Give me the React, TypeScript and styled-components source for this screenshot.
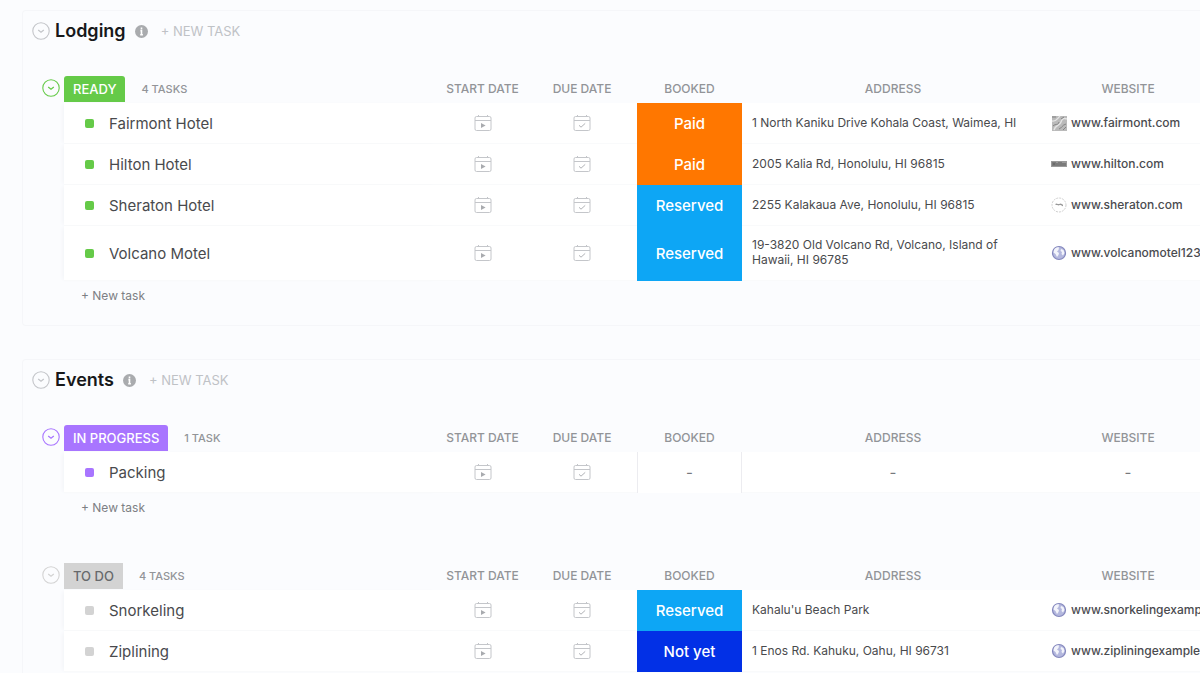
import React from "react";
import styled, { createGlobalStyle } from "styled-components";

const GlobalStyle = createGlobalStyle`
  *, *::before, *::after { box-sizing: border-box; }
  body {
    margin: 0;
    background: #fbfcfe;
    color: #494a4d;
    font-family: Inter, "Liberation Sans", sans-serif;
    font-size: 15px;
  }
  button {
    font-family: inherit;
    border: 0;
    padding: 0;
    background: none;
    cursor: pointer;
  }
  svg { flex: none; }
`;

const Page = styled.main`
  display: flex;
  flex-direction: column;
  gap: 33px;
  height: 100vh;
  overflow: hidden;
  padding: 10px 0 0 22px;
`;

const Panel = styled.section`
  flex: none;
  margin-right: -12px;
  padding: 0 0 16px 19px;
  border: 1px solid #f5f6f9;
  border-right: 0;
  border-radius: 4px 0 0 4px;
`;

const PanelHeader = styled.header`
  display: flex;
  align-items: center;
  height: 40px;
  margin: 0 0 24px -10px;
`;

const PanelTitle = styled.h2`
  margin: 0 9px 0 5px;
  color: #17181a;
  font-size: 18px;
  line-height: 24px;
  font-weight: 600;
`;

const HeaderNewTask = styled.button`
  margin-left: 13px;
  color: #bfc2c6;
  font-size: 13px;
  line-height: 16px;
`;

const ToggleButton = styled.button<{ $color: string }>`
  display: flex;
  flex: none;
  width: 18px;
  height: 18px;
  color: ${(p) => p.$color};
`;

const Groups = styled.div`
  display: flex;
  flex-direction: column;
  gap: 41px;
`;

const Group = styled.section`
  display: grid;
  grid-template-columns: 18px minmax(0, 1fr);
  column-gap: 4px;

  & > ${ToggleButton} { margin-top: 4px; }
`;

const TaskTable = styled.table`
  width: 100%;
  table-layout: fixed;
  border-collapse: separate;
  border-spacing: 0;
`;

const ColumnHead = styled.th<{ $width?: number }>`
  width: ${(p) => (p.$width ? `${p.$width}px` : "auto")};
  height: 28px;
  padding: 0;
  color: #929498;
  font-size: 12px;
  line-height: 16px;
  font-weight: 500;
  text-align: center;
  text-transform: uppercase;
`;

const StatusBar = styled.div`
  display: flex;
  align-items: center;
  gap: 16px;
  height: 28px;
  font-size: 11px;
`;

const StatusPill = styled.span<{ $bg: string; $fg: string; $square?: boolean }>`
  padding: 0 9px;
  border-radius: ${(p) => (p.$square ? "0" : "3px 3px 0 0")};
  background: ${(p) => p.$bg};
  color: ${(p) => p.$fg};
  font-size: 13px;
  line-height: 26px;
  font-weight: 500;
`;

const Row = styled.tr<{ $tall?: boolean }>`
  height: ${(p) => (p.$tall ? 55 : 41)}px;
`;

const Cell = styled.td`
  padding: 0;
  background: #ffffff;
  border-bottom: 1px solid #f9fafb;
  color: #77797d;
  text-align: center;
`;

const NameCell = styled(Cell)`
  padding: 1px 0 0 21px;
  box-shadow: -3px 0 4px -2px #f1f3f6;
  color: #494a4d;
  text-align: left;
`;

const TaskName = styled.span`
  display: flex;
  align-items: center;
  gap: 15px;
  font-size: 15px;
  line-height: 20px;
`;

const StatusDot = styled.span<{ $color: string }>`
  width: 9px;
  height: 9px;
  border-radius: 2px;
  background: ${(p) => p.$color};
`;

const BookedCell = styled(Cell)<{ $bg?: string }>`
  background: ${(p) => p.$bg ?? "#ffffff"};
  border: 0 solid #ececf0;
  border-width: ${(p) => (p.$bg ? "0" : "0 1px")};
  color: ${(p) => (p.$bg ? "#ffffff" : "#77797d")};
  font-size: 15px;
  font-weight: ${(p) => (p.$bg ? 500 : 400)};
`;

const AddressCell = styled(Cell)`
  padding: 0 10px 2px;
  color: #494a4d;
  font-size: 12px;
  line-height: 15px;
  text-align: left;
`;

const WebsiteCell = styled(Cell)`
  padding-left: 7px;
  text-align: left;
`;

const WebsiteLink = styled.a`
  display: flex;
  align-items: center;
  gap: 4px;
  color: #4a4b4f;
  font-size: 12px;
  line-height: 16px;
  font-weight: 500;
  text-decoration: none;
  white-space: nowrap;
`;

const IconButton = styled.button`
  display: block;
  width: 18px;
  height: 18px;
  margin: 0 auto;
`;

const NewTask = styled.button`
  grid-column: 2;
  justify-self: start;
  height: 28px;
  padding-left: 17px;
  color: #7d7f84;
  font-size: 12px;
`;

const ChevronCircle = () => (
  <svg width="18" height="18" viewBox="0 0 18 18" fill="none" stroke="currentColor" strokeWidth="1.1">
    <circle cx="9" cy="9" r="8.2" />
    <path d="M6.2 8 9 10.2 11.8 8" strokeWidth="1.3" />
  </svg>
);

const InfoIcon = () => (
  <svg width="13" height="13" viewBox="0 0 13 13">
    <circle cx="6.5" cy="6.5" r="6.5" fill="#a9abae" />
    <path d="M6.5 2.6v1.6M5.4 5.6h1.1v4M5.2 9.7h2.7" stroke="#fff" strokeWidth="1.6" fill="none" />
  </svg>
);

const CalendarIcon = ({ kind }: { kind: "start" | "due" }) => (
  <svg width="18" height="18" viewBox="0 0 18 18" fill="none" stroke="#c4c6ca" strokeWidth="1">
    <rect x="1" y="2.5" width="16" height="14" rx="1.5" />
    <path d="M1 6.5h16M4.5 1v2M13.5 1v2" />
    {kind === "start" ? (
      <path d="M7 9v5l4.6-2.5z" fill="#a9abaf" stroke="none" />
    ) : (
      <path d="m6 11.3 2 1.9 4.2-3.8" stroke="#b0b2b6" />
    )}
  </svg>
);

type Favicon = "fairmont" | "hilton" | "sheraton" | "globe";

const SiteIcon = ({ name }: { name: Favicon }) => (
  <svg width="16" height="16" viewBox="0 0 16 16" fill="none">
    {name === "fairmont" && (
      <>
        <rect x="1" y="1" width="15" height="15" fill="#bababa" />
        <path d="M1 6c4 1 5-2 8-5M3 15c1-5 6-4 7-8s4-4 6-3" stroke="#e4e4e4" strokeWidth="1.4" />
        <path d="M1 2h4M2 11c3-3 5 0 6-4M8 14c3-1 3-4 7-5M10 4l3-2M12 15l3-3" stroke="#858585" />
      </>
    )}
    {name === "hilton" && (
      <>
        <rect y="5" width="16" height="6" fill="#9a9a9a" />
        <path d="M2 6v4M4 6v4M2 8h2M6 7v3M8 6v4M10 6v4M12 7v3M14 7v3" stroke="#5c5c5c" />
      </>
    )}
    {name === "sheraton" && (
      <>
        <circle cx="8" cy="8" r="7" stroke="#cfcfcf" strokeDasharray="2 1" />
        <path d="M4.5 7.5c2-1 2 1 4 0s2 1 3.5 1" stroke="#999" strokeWidth="1.3" />
      </>
    )}
    {name === "globe" && (
      <>
        <circle cx="8" cy="8" r="6.5" fill="#b4b8de" stroke="#8487bd" strokeWidth="1.2" />
        <path d="M3 5c1-2 3-3 5-2.5L7.5 5 6 6.5l2 1.5-.5 2L6 12 4.5 9 2.5 7.5zM10 4l2.5 1 1 3-1.5 2.5L10.5 9 11 7 9.5 6z" fill="#f3f4fb" />
      </>
    )}
  </svg>
);

interface Task {
  name: string;
  booked?: string;
  address?: string;
  site?: string;
  icon?: Favicon;
  tall?: boolean;
}

interface TaskGroup {
  status: string;
  count: string;
  color: string;
  text: string;
  square?: boolean;
  tasks: Task[];
  canAdd: boolean;
}

const bookedColors: Record<string, string> = {
  Paid: "#ff7700",
  Reserved: "#0da6f5",
  "Not yet": "#0230e6",
};

const lists: { title: string; groups: TaskGroup[] }[] = [
  {
    title: "Lodging",
    groups: [
      {
        status: "READY",
        count: "4 TASKS",
        color: "#65ca48",
        text: "#ffffff",
        canAdd: true,
        tasks: [
          { name: "Fairmont Hotel", booked: "Paid", address: "1 North Kaniku Drive Kohala Coast, Waimea, HI", site: "www.fairmont.com", icon: "fairmont" },
          { name: "Hilton Hotel", booked: "Paid", address: "2005 Kalia Rd, Honolulu, HI 96815", site: "www.hilton.com", icon: "hilton" },
          { name: "Sheraton Hotel", booked: "Reserved", address: "2255 Kalakaua Ave, Honolulu, HI 96815", site: "www.sheraton.com", icon: "sheraton" },
          { name: "Volcano Motel", booked: "Reserved", address: "19-3820 Old Volcano Rd, Volcano, Island of Hawaii, HI 96785", site: "www.volcanomotel123.com", icon: "globe", tall: true },
        ],
      },
    ],
  },
  {
    title: "Events",
    groups: [
      {
        status: "IN PROGRESS",
        count: "1 TASK",
        color: "#a875ff",
        text: "#ffffff",
        canAdd: true,
        tasks: [{ name: "Packing" }],
      },
      {
        status: "TO DO",
        count: "4 TASKS",
        color: "#d3d3d3",
        text: "#67696c",
        square: true,
        canAdd: false,
        tasks: [
          { name: "Snorkeling", booked: "Reserved", address: "Kahalu'u Beach Park", site: "www.snorkelingexample.com", icon: "globe" },
          { name: "Ziplining", booked: "Not yet", address: "1 Enos Rd. Kahuku, Oahu, HI 96731", site: "www.zipliningexample.com", icon: "globe" },
        ],
      },
    ],
  },
];

const TaskRow = ({ task, color }: { task: Task; color: string }) => (
  <Row $tall={task.tall}>
    <NameCell>
      <TaskName>
        <StatusDot $color={color} />
        {task.name}
      </TaskName>
    </NameCell>
    <Cell>
      <IconButton aria-label="Set start date"><CalendarIcon kind="start" /></IconButton>
    </Cell>
    <Cell>
      <IconButton aria-label="Set due date"><CalendarIcon kind="due" /></IconButton>
    </Cell>
    <BookedCell $bg={task.booked && bookedColors[task.booked]}>{task.booked ?? "-"}</BookedCell>
    {task.address ? <AddressCell>{task.address}</AddressCell> : <Cell>-</Cell>}
    {task.site && task.icon ? (
      <WebsiteCell>
        <WebsiteLink href={`https://${task.site}`}>
          <SiteIcon name={task.icon} />
          {task.site}
        </WebsiteLink>
      </WebsiteCell>
    ) : (
      <Cell>-</Cell>
    )}
  </Row>
);

const StatusGroup = ({ group }: { group: TaskGroup }) => (
  <Group>
    <ToggleButton $color={group.color} aria-label={`Collapse ${group.status}`}>
      <ChevronCircle />
    </ToggleButton>
    <TaskTable>
      <thead>
        <tr>
          <ColumnHead scope="col">
            <StatusBar>
              <StatusPill $bg={group.color} $fg={group.text} $square={group.square}>
                {group.status}
              </StatusPill>
              {group.count}
            </StatusBar>
          </ColumnHead>
          <ColumnHead scope="col" $width={89}>Start date</ColumnHead>
          <ColumnHead scope="col" $width={110}>Due date</ColumnHead>
          <ColumnHead scope="col" $width={105}>Booked</ColumnHead>
          <ColumnHead scope="col" $width={302}>Address</ColumnHead>
          <ColumnHead scope="col" $width={168}>Website</ColumnHead>
        </tr>
      </thead>
      <tbody>
        {group.tasks.map((task) => (
          <TaskRow key={task.name} task={task} color={group.color} />
        ))}
      </tbody>
    </TaskTable>
    {group.canAdd && <NewTask>+ New task</NewTask>}
  </Group>
);

export default function App() {
  return (
    <>
      <GlobalStyle />
      <Page>
        {lists.map((list) => (
          <Panel key={list.title}>
            <PanelHeader>
              <ToggleButton $color="#c3c5c9" aria-label={`Collapse ${list.title}`}>
                <ChevronCircle />
              </ToggleButton>
              <PanelTitle>{list.title}</PanelTitle>
              <InfoIcon />
              <HeaderNewTask>+ NEW TASK</HeaderNewTask>
            </PanelHeader>
            <Groups>
              {list.groups.map((group) => (
                <StatusGroup key={group.status} group={group} />
              ))}
            </Groups>
          </Panel>
        ))}
      </Page>
    </>
  );
}
